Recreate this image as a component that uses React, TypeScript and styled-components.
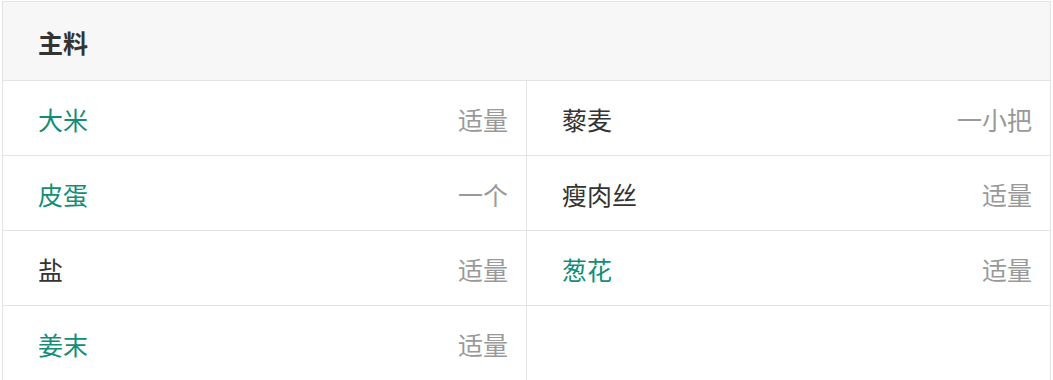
import React from "react";
import styled, { createGlobalStyle } from "styled-components";

const Global = createGlobalStyle`
  html, body { margin: 0; padding: 0; background: #fff; }
  body { font-family: "Noto Sans CJK SC", "Noto Sans", sans-serif; }
`;

const Page = styled.div`
  padding: 1px 2px 0 2px;
  width: 1049px;
`;

const Table = styled.section`
  border: 1px solid #e3e3e3;
  border-bottom: none;
`;

const Header = styled.h3`
  margin: 0;
  height: 78px;
  display: flex;
  align-items: center;
  padding: 1px 35px 0;
  box-sizing: border-box;
  height: 79px;
  background: #f7f7f7;
  border-bottom: 1px solid #e3e3e3;
  font-size: 25px;
  font-weight: 700;
  color: #333;
`;

const Grid = styled.div`
  display: grid;
  grid-template-columns: 523px 1fr;
`;

const Cell = styled.div<{ $right?: boolean }>`
  display: flex;
  align-items: center;
  justify-content: space-between;
  padding: 1px 18px 0 35px;
  box-sizing: border-box;
  height: 75px;
  border-bottom: 1px solid #e3e3e3;
  border-left: ${(p) => (p.$right ? "1px solid #e3e3e3" : "none")};
  font-size: 25px;
`;

const Name = styled.span<{ $link?: boolean }>`
  color: ${(p) => (p.$link ? "#138d78" : "#333")};
`;

const Amount = styled.span`
  color: #999;
`;

type Item = { name: string; amount: string; link?: boolean };

const items: Item[] = [
  { name: "大米", amount: "适量", link: true },
  { name: "藜麦", amount: "一小把" },
  { name: "皮蛋", amount: "一个", link: true },
  { name: "瘦肉丝", amount: "适量" },
  { name: "盐", amount: "适量" },
  { name: "葱花", amount: "适量", link: true },
  { name: "姜末", amount: "适量", link: true },
  { name: "", amount: "" },
];

export default function App() {
  return (
    <Page>
      <Global />
      <Table>
        <Header>主料</Header>
        <Grid>
          {items.map((it, i) => (
            <Cell key={i} $right={i % 2 === 1}>
              <Name $link={it.link}>{it.name}</Name>
              <Amount>{it.amount}</Amount>
            </Cell>
          ))}
        </Grid>
      </Table>
    </Page>
  );
}
